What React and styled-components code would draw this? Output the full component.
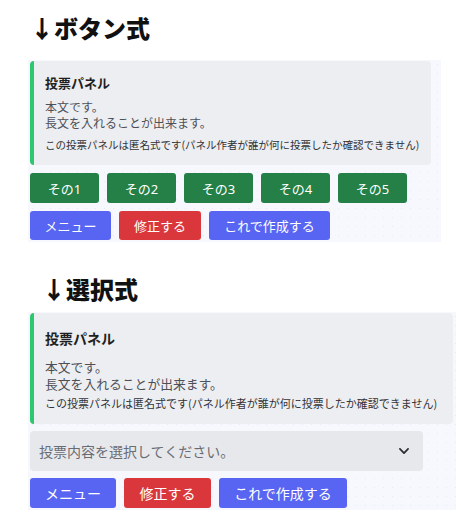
import React from "react";
import styled, { createGlobalStyle } from "styled-components";

const GlobalStyle = createGlobalStyle`
  body {
    margin: 0;
    background: #ffffff;
    font-family: "Noto Sans", "Noto Sans CJK JP", sans-serif;
  }
`;

// spacing presets for the two screenshots (the second one is slightly larger)
const small = {
  title: 13, titleLh: 20, body: 12, bodyLh: 16, foot: 10.5, footLh: 14,
  padTop: 12, bodyGap: 6, footGap: 7, padBottom: 13, btn: 13, gap: 8, mr: 8,
};
const large = {
  title: 14, titleLh: 22, body: 12.8, bodyLh: 17, foot: 11, footLh: 15,
  padTop: 14, bodyGap: 9, footGap: 4, padBottom: 13, btn: 14, gap: 7, mr: 1,
};

const Page = styled.div`
  width: 461px;
  height: 517px;
  overflow: hidden;
`;

const Heading = styled.h2`
  margin: 0;
  font-family: "Noto Sans CJK JP", sans-serif;
  font-size: 24px;
  font-weight: 900;
  line-height: 30px;
  color: #111;
  padding-left: ${(p) => p.$left}px;
  padding-top: ${(p) => p.$top}px;
`;

const Board = styled.div`
  margin-left: 28px;
  margin-top: ${(p) => p.$top}px;
  width: ${(p) => p.$w}px;
  padding: 1px 2px 2px 2px;
  box-sizing: border-box;
  display: flex;
  flex-direction: column;
  gap: ${(p) => p.$v.gap}px;
  background-color: #f7f7fe;
  background-image: radial-gradient(#e8e8f6 0.6px, transparent 0.8px);
  background-size: 9px 9px;
`;

const Embed = styled.div`
  background: #edeef1;
  border-left: 4px solid #2dc770;
  border-radius: 4px;
  padding: ${(p) => `${p.$v.padTop}px 12px ${p.$v.padBottom}px 11px`};
  margin-right: ${(p) => p.$v.mr}px;
`;

const Title = styled.div`
  font-family: "Noto Sans CJK JP", sans-serif;
  font-weight: 700;
  font-size: ${(p) => p.$v.title}px;
  line-height: ${(p) => p.$v.titleLh}px;
  color: #1e1f22;
`;

const Body = styled.div`
  margin-top: ${(p) => p.$v.bodyGap}px;
  font-family: "Noto Sans CJK JP", sans-serif;
  font-size: ${(p) => p.$v.body}px;
  line-height: ${(p) => p.$v.bodyLh}px;
  color: #4e5058;
`;

const Footer = styled.div`
  margin-top: ${(p) => p.$v.footGap}px;
  font-family: "Noto Sans CJK JP", sans-serif;
  font-size: ${(p) => p.$v.foot}px;
  line-height: ${(p) => p.$v.footLh}px;
  color: #313338;
  white-space: nowrap;
`;

const Row = styled.div`
  display: flex;
  gap: 8px;
`;

const colors = {
  green: "#248046",
  red: "#da373c",
  blurple: "#5865f2",
};

const Button = styled.div`
  width: ${(p) => p.$w}px;
  height: ${(p) => p.$h}px;
  border-radius: 3px;
  background: ${(p) => colors[p.$c]};
  color: #fff;
  display: flex;
  align-items: center;
  justify-content: center;
  font-family: "Noto Sans", "Noto Sans CJK JP", sans-serif;
  font-size: ${(p) => p.$v.btn}px;
  font-weight: 400;
`;

const Select = styled.div`
  width: 393px;
  height: 40px;
  box-sizing: border-box;
  border-radius: 4px;
  background: #e7e8eb;
  display: flex;
  align-items: center;
  justify-content: space-between;
  padding: 0 12px 0 9px;
  font-family: "Noto Sans CJK JP", sans-serif;
  font-size: 14px;
  color: #6a6c74;
`;

const Panel = ({ v }) => (
  <Embed $v={v}>
    <Title $v={v}>投票パネル</Title>
    <Body $v={v}>
      本文です。
      <br />
      長文を入れることが出来ます。
    </Body>
    <Footer $v={v}>
      この投票パネルは匿名式です(パネル作者が誰が何に投票したか確認できません)
    </Footer>
  </Embed>
);

const Chevron = () => (
  <svg width="14" height="14" viewBox="0 0 24 24" fill="none">
    <path
      d="M5 8.5l7 7 7-7"
      stroke="#2b2d31"
      strokeWidth="3"
      strokeLinecap="round"
      strokeLinejoin="round"
    />
  </svg>
);

const App = () => (
  <Page>
    <GlobalStyle />
    <Heading $left={30} $top={13}>↓ボタン式</Heading>
    <Board $top={17} $w={413} $v={small}>
      <Panel v={small} />
      <Row>
        {[1, 2, 3, 4, 5].map((n) => (
          <Button key={n} $v={small} $w={69} $h={30} $c="green">
            その{n}
          </Button>
        ))}
      </Row>
      <Row>
        <Button $v={small} $w={81} $h={29} $c="blurple">メニュー</Button>
        <Button $v={small} $w={82} $h={29} $c="red">修正する</Button>
        <Button $v={small} $w={121} $h={29} $c="blurple">これで作成する</Button>
      </Row>
    </Board>
    <Heading $left={42} $top={32}>↓選択式</Heading>
    <Board $top={8} $w={428} $v={large}>
      <Panel v={large} />
      <Select>
        投票内容を選択してください。
        <Chevron />
      </Select>
      <Row>
        <Button $v={large} $w={86} $h={30} $c="blurple">メニュー</Button>
        <Button $v={large} $w={87} $h={30} $c="red">修正する</Button>
        <Button $v={large} $w={128} $h={30} $c="blurple">これで作成する</Button>
      </Row>
    </Board>
  </Page>
);

export default App;
